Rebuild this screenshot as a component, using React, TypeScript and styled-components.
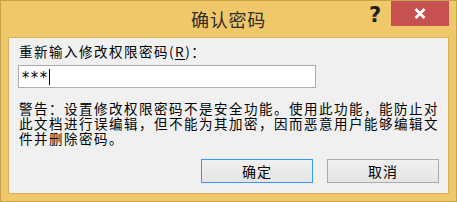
import styled, { createGlobalStyle } from "styled-components";

const GlobalStyle = createGlobalStyle`
  html, body {
    margin: 0;
    padding: 0;
    background: #f0c869;
  }
  * {
    box-sizing: border-box;
  }
`;

const Window = styled.div`
  width: 457px;
  height: 202px;
  border: 1px solid #c9a24c;
  background: #f0c869;
  display: flex;
  flex-direction: column;
  font-family: "Noto Sans CJK SC", "Noto Sans", sans-serif;
`;

const TitleBar = styled.div`
  height: 36px;
  display: grid;
  grid-template-columns: 1fr auto 1fr;
  flex-shrink: 0;
`;

const Title = styled.div`
  grid-column: 2;
  padding-top: 6px;
  font-size: 18px;
  line-height: 24px;
  letter-spacing: 0.7px;
  color: #2e2e2e;
`;

const Controls = styled.div`
  grid-column: 3;
  display: flex;
  justify-content: flex-end;
  align-items: flex-start;
  padding-right: 7px;
  gap: 1px;
`;

const HelpButton = styled.div`
  width: 30px;
  height: 25px;
  display: flex;
  align-items: center;
  justify-content: center;
  font-family: "DejaVu Sans", sans-serif;
  font-weight: bold;
  font-size: 21px;
  color: #1e1e1e;
  padding-top: 2px;
`;

const CloseButton = styled.div`
  width: 58px;
  height: 25px;
  background: #c75050;
  display: flex;
  align-items: center;
  justify-content: center;
`;

const Client = styled.div`
  flex: 1;
  margin: 0 7px 7px 7px;
  border: 1px solid #d6b260;
  background: #f0f0f0;
  padding: 6px 9px 0 10px;
  display: flex;
  flex-direction: column;
  color: #000;
  font-size: 13.5px;
  letter-spacing: 1.5px;
`;

const Label = styled.div`
  line-height: 15px;
  height: 15px;
  white-space: nowrap;
  u {
    text-underline-offset: 2px;
  }
`;

const PasswordBox = styled.div`
  margin: 6px 0 0 -1px;
  width: 298px;
  height: 23px;
  background: #fff;
  border: 1px solid #abadb3;
  display: flex;
  align-items: center;
  padding-left: 2px;
  font-family: "DejaVu Sans", sans-serif;
  font-size: 15px;
  letter-spacing: 0;
`;

const Star = styled.span`
  display: inline-block;
  width: 9px;
  text-align: center;
  padding-top: 3px;
`;

const Caret = styled.span`
  display: inline-block;
  width: 1px;
  height: 16px;
  background: #000;
  margin-left: 1px;
`;

const Warning = styled.div`
  margin-top: 13px;
  line-height: 15px;
  white-space: nowrap;
`;

const ButtonRow = styled.div`
  margin-top: 13px;
  display: flex;
  justify-content: flex-end;
  gap: 14px;
`;

const Button = styled.div<{ $focused?: boolean }>`
  width: 112px;
  height: 24px;
  display: flex;
  align-items: center;
  justify-content: center;
  border: 1px solid ${(p) => (p.$focused ? "#3399ff" : "#acacac")};
  background: linear-gradient(#f0f0f0, #e5e5e5);
  font-size: 14px;
  letter-spacing: 1px;
`;

export default function App() {
  return (
    <>
      <GlobalStyle />
      <Window>
        <TitleBar>
          <Title>确认密码</Title>
          <Controls>
            <HelpButton>?</HelpButton>
            <CloseButton>
              <svg width="12" height="11" viewBox="0 0 12 11">
                <path d="M1.5 1 L10.5 10 M10.5 1 L1.5 10" stroke="#fff" strokeWidth="2.6" />
              </svg>
            </CloseButton>
          </Controls>
        </TitleBar>
        <Client>
          <Label>
            重新输入修改权限密码(<u>R</u>)：
          </Label>
          <PasswordBox>
            {["*", "*", "*"].map((s, i) => (
              <Star key={i}>{s}</Star>
            ))}
            <Caret />
          </PasswordBox>
          <Warning>
            警告：设置修改权限密码不是安全功能。使用此功能，能防止对
            <br />
            此文档进行误编辑，但不能为其加密，因而恶意用户能够编辑文
            <br />
            件并删除密码。
          </Warning>
          <ButtonRow>
            <Button $focused>确定</Button>
            <Button>取消</Button>
          </ButtonRow>
        </Client>
      </Window>
    </>
  );
}
